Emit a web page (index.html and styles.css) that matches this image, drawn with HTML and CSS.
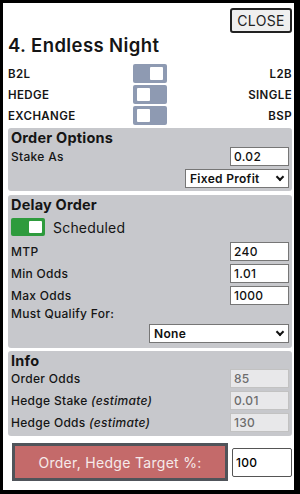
FILE: index.html
```html
<!DOCTYPE html>
<html>
<head lang="en">
    <meta charset="UTF-8">
    <title>Order</title>
    <link rel="stylesheet" href="styles.css">
</head>
<body>

<div class="popup">
    <div class="top-bar">
        <button class="close-btn">CLOSE</button>
    </div>
    <h2 class="title">4. Endless Night</h2>

    <div class="switch-row">
        <span class="opt-left">B2L</span>
        <span class="switch on"><span class="knob"></span></span>
        <span class="opt-right">L2B</span>
    </div>
    <div class="switch-row">
        <span class="opt-left">HEDGE</span>
        <span class="switch"><span class="knob"></span></span>
        <span class="opt-right">SINGLE</span>
    </div>
    <div class="switch-row">
        <span class="opt-left">EXCHANGE</span>
        <span class="switch"><span class="knob"></span></span>
        <span class="opt-right">BSP</span>
    </div>

    <div class="group">
        <h3>Order Options</h3>
        <div class="field first">
            <label>Stake As</label>
            <input class="num" value="0.02">
        </div>
        <div class="field end">
            <div class="select-wrap profit">
                <select><option>Fixed Profit</option></select>
            </div>
        </div>
    </div>

    <div class="group delay">
        <h3>Delay Order</h3>
        <div class="sched">
            <span class="switch green on"><span class="knob"></span></span>
            <span class="sched-label">Scheduled</span>
        </div>
        <div class="field mtp">
            <label>MTP</label>
            <input class="num" value="240">
        </div>
        <div class="field">
            <label>Min Odds</label>
            <input class="num" value="1.01">
        </div>
        <div class="field">
            <label>Max Odds</label>
            <input class="num" value="1000">
        </div>
        <div class="qualify">Must Qualify For:</div>
        <div class="field end">
            <div class="select-wrap none-sel">
                <select><option>None</option></select>
            </div>
        </div>
    </div>

    <div class="group info">
        <h3>Info</h3>
        <div class="field first">
            <label>Order Odds</label>
            <input class="num" value="85" disabled>
        </div>
        <div class="field">
            <label>Hedge Stake <em>(estimate)</em></label>
            <input class="num" value="0.01" disabled>
        </div>
        <div class="field">
            <label>Hedge Odds <em>(estimate)</em></label>
            <input class="num" value="130" disabled>
        </div>
    </div>

    <div class="submit-row">
        <button class="order-btn">Order, Hedge Target %:</button>
        <input class="target" value="100">
    </div>
</div>

</body>
</html>
```

FILE: styles.css
```css
body, html {
    padding: 0;
    margin: 0;
}

body {
    background: #000;
    font-family: Inter, "Noto Sans", sans-serif;
    color: #151515;
}

.popup {
    margin: 3px 6px 4px 3px;
    height: 487px;
    box-sizing: border-box;
    padding: 5px 2px 0 5px;
    background: #fff;
}

.top-bar {
    display: flex;
    justify-content: flex-end;
}

.close-btn {
    width: 62px;
    height: 25px;
    padding: 0;
    border: 2px solid #222;
    border-radius: 3px;
    background: #efefef;
    font-family: inherit;
    font-size: 14px;
    letter-spacing: 0.3px;
    color: #222;
}

.title {
    margin: 1px 0 8px 0;
    font-size: 18.5px;
    line-height: 22px;
    font-weight: 600;
    letter-spacing: 0.4px;
}

/* toggles */
.switch-row {
    display: grid;
    grid-template-columns: 1fr 34px 1fr;
    align-items: center;
    height: 19px;
    margin-top: 2px;
    font-size: 11.5px;
    font-weight: 600;
    letter-spacing: 0.4px;
}

.opt-right {
    text-align: right;
}

.switch {
    position: relative;
    display: block;
    width: 34px;
    height: 19px;
    border-radius: 2px;
    background: #8e9ab2;
}

.switch .knob {
    position: absolute;
    top: 3px;
    left: 4px;
    width: 13px;
    height: 13px;
    border-radius: 1px;
    background: #fff;
}

.switch.on .knob {
    left: auto;
    right: 4px;
}

.switch.green {
    height: 18px;
    background: #2e9b3d;
}

.switch.green .knob {
    right: 3px;
    top: 3px;
    width: 13px;
    height: 12px;
}

/* option groups */
.group {
    margin-top: 3px;
    padding: 1px 3px 3px 3px;
    border-radius: 3px;
    background: #c7c8cc;
}

.group h3 {
    margin: 0;
    font-size: 14.5px;
    line-height: 17px;
    font-weight: 700;
    letter-spacing: 0.2px;
}

.group.delay {
    margin-top: 4px;
    padding-bottom: 5px;
}

.group.info {
    padding-bottom: 4px;
}

.field {
    display: flex;
    justify-content: space-between;
    align-items: center;
    height: 19px;
    margin-top: 3px;
    font-size: 12px;
    font-weight: 500;
    letter-spacing: 0.3px;
}

.field.first {
    margin-top: 1px;
}

.info .field.first {
    margin-top: 0;
}

.field.mtp {
    margin-top: 6px;
}

.field.end {
    justify-content: flex-end;
}

.field em {
    font-style: italic;
}

input.num {
    width: 59px;
    height: 19px;
    box-sizing: border-box;
    padding: 0 3px;
    border: 1px solid #767676;
    background: #fff;
    font-family: inherit;
    font-size: 12px;
    font-weight: 500;
    letter-spacing: 0.3px;
    color: #111;
}

input.num:disabled {
    border-color: #c2c2c2;
    background: #e8e8ea;
    color: #6d6d6d;
}

.sched {
    display: flex;
    align-items: center;
    margin-top: 5px;
}

.sched-label {
    margin-left: 8px;
    font-size: 14px;
    letter-spacing: 0.2px;
}

.qualify {
    margin-top: 2px;
    height: 14px;
    line-height: 14px;
    font-size: 12px;
    font-weight: 500;
    letter-spacing: 0.3px;
}

.select-wrap {
    position: relative;
}

.select-wrap select {
    -webkit-appearance: none;
    appearance: none;
    width: 100%;
    height: 19px;
    box-sizing: border-box;
    padding: 0 4px;
    border: 1px solid #767676;
    border-radius: 0;
    background: #fff;
    font-family: inherit;
    font-size: 12px;
    font-weight: 600;
    letter-spacing: 0.3px;
    color: #111;
}

.select-wrap::after {
    content: "";
    position: absolute;
    right: 6px;
    top: 5px;
    width: 4px;
    height: 4px;
    border-right: 2px solid #111;
    border-bottom: 2px solid #111;
    transform: rotate(45deg);
}

.select-wrap.profit {
    width: 104px;
}

.select-wrap.none-sel {
    width: 140px;
}

/* bottom */
.submit-row {
    display: flex;
    align-items: center;
    margin-top: 7px;
}

.order-btn {
    width: 216px;
    height: 38px;
    margin-left: 4px;
    border: 3px solid #50545a;
    background: #c46a6a;
    font-family: inherit;
    font-size: 14px;
    letter-spacing: 0.3px;
    color: #f6eaea;
}

.target {
    width: 60px;
    height: 29px;
    box-sizing: border-box;
    margin-left: 4px;
    padding: 0 3px;
    border: 1px solid #555;
    border-radius: 2px;
    font-family: inherit;
    font-size: 12px;
    font-weight: 500;
    letter-spacing: 0.3px;
}
```
